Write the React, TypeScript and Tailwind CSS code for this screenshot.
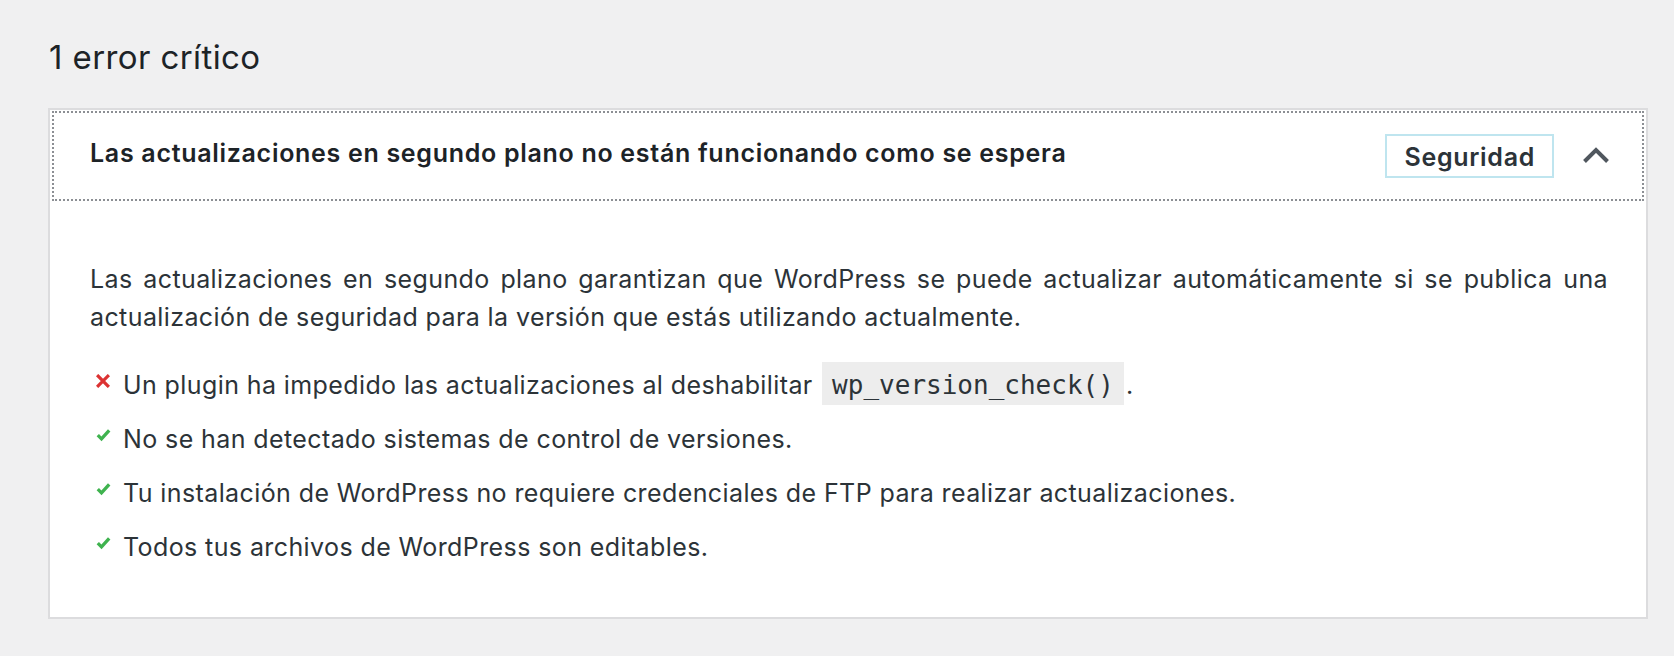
import React from "react";

const sans = { fontFamily: "Inter, 'Noto Sans', sans-serif" } as const;

function XIcon() {
  return (
    <svg width="14" height="14" viewBox="0 0 14 14" className="shrink-0">
      <path d="M2.2 2.2 L11.8 11.8 M11.8 2.2 L2.2 11.8" stroke="#dc3232" strokeWidth="3.2" strokeLinecap="square" fill="none" />
    </svg>
  );
}

function CheckIcon() {
  return (
    <svg width="15" height="14" viewBox="0 0 15 14" className="shrink-0">
      <path d="M1.8 7.2 L5.5 10.9 L13.2 2.4" stroke="#3fb34f" strokeWidth="3.3" strokeLinecap="butt" strokeLinejoin="miter" fill="none" />
    </svg>
  );
}

function Item({ ok, children }: { ok: boolean; children: React.ReactNode }) {
  return (
    <li className="flex items-start">
      <span className="w-[33px] shrink-0 pl-[6px] pt-[8px] flex">{ok ? <CheckIcon /> : <XIcon />}</span>
      <span>{children}</span>
    </li>
  );
}

export default function App() {
  return (
    <div className="min-h-[656px] bg-[#f0f0f1] pl-[48px] pr-[26px] pt-[37px]" style={sans}>
      <h2 className="text-[33px] leading-[40px] font-normal text-[#1d2327] pl-[1px] tracking-[0.4px]">1 error crítico</h2>
      <div className="mt-[31px] border-2 border-[#dcdcde] bg-white">
        <div className="px-[2px] pt-px pb-px">
          <button className="w-full h-[90px] border-2 border-dotted border-[#8c8f94] flex items-center pl-[36px] pr-[32px] text-left bg-white">
            <span className="flex-1 text-[25px] leading-[30px] font-semibold text-[#1d2327] mb-[6px] tracking-[0.7px]">
              Las actualizaciones en segundo plano no están funcionando como se espera
            </span>
            <span className="border-2 border-[#bfe5ef] px-[17px] pt-[6px] pb-[4px] text-[25px] leading-[30px] font-semibold text-[#2c3338] tracking-[0.7px]">
              Seguridad
            </span>
            <svg width="28" height="18" viewBox="0 0 28 18" className="ml-[28px] mb-[2px]">
              <path d="M2.5 15.5 L14 4 L25.5 15.5" stroke="#50575e" strokeWidth="4" fill="none" strokeLinecap="butt" />
            </svg>
          </button>
        </div>
        <div className="pt-[58px] pb-[51px] pl-[40px] pr-[38px] text-[25px] leading-[38px] text-[#2c3338] tracking-[0.4px]">
          <p className="text-justify">
            Las actualizaciones en segundo plano garantizan que WordPress se puede actualizar automáticamente si se publica una actualización de seguridad para la versión que estás utilizando actualmente.
          </p>
          <ul className="mt-[30px] flex flex-col gap-[16px]">
            <Item ok={false}>
              Un plugin ha impedido las actualizaciones al deshabilitar{" "}
              <code
                className="mx-[2px] bg-[#ededed] px-[10px] pt-[8px] pb-[5px] text-[26px] tracking-normal text-[#2c3338]"
                style={{ fontFamily: "'DejaVu Sans Mono', 'Liberation Mono', monospace" }}
              >
                wp_version_check()
              </code>
              .
            </Item>
            <Item ok={true}>No se han detectado sistemas de control de versiones.</Item>
            <Item ok={true}>Tu instalación de WordPress no requiere credenciales de FTP para realizar actualizaciones.</Item>
            <Item ok={true}>Todos tus archivos de WordPress son editables.</Item>
          </ul>
        </div>
      </div>
    </div>
  );
}
